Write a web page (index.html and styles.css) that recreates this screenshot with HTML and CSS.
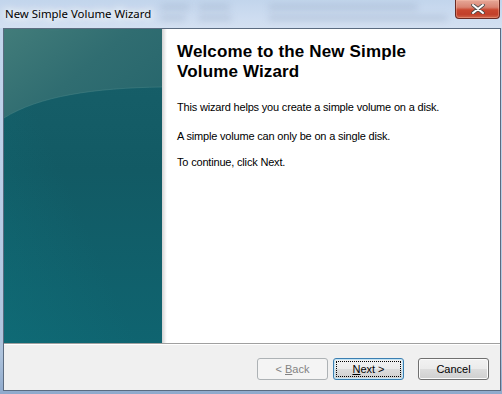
FILE: index.html
```html
<!DOCTYPE html>
<html>
<head>
<meta charset="utf-8">
<link rel="stylesheet" href="styles.css">
</head>
<body>
<div class="window">
  <div class="titlebar">
    <div class="glass">
      <span class="blob b1"></span><span class="blob b2"></span><span class="blob b3"></span>
      <span class="blob b4"></span><span class="blob b5"></span><span class="blob b6"></span>
    </div>
    <span class="title">New Simple Volume Wizard</span>
    <div class="close">
      <svg width="14" height="10" viewBox="0 0 14 10">
        <path d="M2 1L12 9M12 1L2 9" stroke="#4a4a4a" stroke-width="3.6" stroke-linecap="round"/>
        <path d="M2 1L12 9M12 1L2 9" stroke="#ffffff" stroke-width="2" stroke-linecap="round"/>
      </svg>
    </div>
  </div>
  <div class="client">
    <div class="main">
      <svg class="banner" viewBox="0 0 158 314" preserveAspectRatio="none" width="158" height="314">
        <defs>
          <linearGradient id="g1" x1="0" y1="0" x2="0" y2="1">
            <stop offset="0" stop-color="#18606a"/>
            <stop offset="0.45" stop-color="#125a64"/>
            <stop offset="1" stop-color="#0f6470"/>
          </linearGradient>
          <linearGradient id="g2" x1="0" y1="1" x2="0.8" y2="0.3">
            <stop offset="0" stop-color="#0f7680" stop-opacity="0.35"/>
            <stop offset="0.6" stop-color="#0f7680" stop-opacity="0"/>
          </linearGradient>
          <linearGradient id="g3" x1="0" y1="0" x2="1" y2="0.7">
            <stop offset="0" stop-color="#427c7a"/>
            <stop offset="0.55" stop-color="#306d71"/>
            <stop offset="1" stop-color="#28676d"/>
          </linearGradient>
        </defs>
        <rect width="158" height="314" fill="url(#g1)"/>
        <rect width="158" height="314" fill="url(#g2)"/>
        <path d="M0 0H158V58C90 59 35 67 0 89Z" fill="url(#g3)"/>
        <path d="M0 89C35 67 90 59 158 58" stroke="#5a9291" stroke-opacity="0.35" fill="none"/>
      </svg>
      <div class="shade"></div>
      <div class="content">
        <h1 class="heading">Welcome to the New Simple Volume Wizard</h1>
        <p class="p1">This wizard helps you create a simple volume on a disk.</p>
        <p class="p2">A simple volume can only be on a single disk.</p>
        <p class="p3">To continue, click Next.</p>
      </div>
    </div>
    <div class="footer">
      <button class="btn btn-disabled" disabled>&lt; <u>B</u>ack</button>
      <button class="btn btn-default"><u>N</u>ext &gt;</button>
      <button class="btn btn-cancel">Cancel</button>
    </div>
  </div>
</div>
</body>
</html>
```

FILE: styles.css
```css
* { box-sizing: border-box; margin: 0; padding: 0; }
html, body { width: 502px; height: 394px; overflow: hidden; }
body { background: #b4c8e1; }

.window {
  width: 502px;
  height: 394px;
  display: flex;
  flex-direction: column;
  background: linear-gradient(to bottom, #c4d7ed 0%, #bccfe7 40%, #aec3dc 90%, #8ea9cc 100%);
}

.titlebar {
  height: 28px;
  flex: none;
  position: relative;
  display: flex;
  align-items: flex-start;
  justify-content: space-between;
  padding-left: 5px;
  background: linear-gradient(to bottom, #c2d5ec 0%, #cddcf0 60%, #d3e0f1 100%);
}

.glass { position: absolute; inset: 0; overflow: hidden; }
.blob {
  position: absolute;
  background: rgba(110, 130, 160, 0.2);
  filter: blur(3px);
  border-radius: 3px;
}
.b1 { left: 160px; top: 4px; width: 30px; height: 6px; }
.b2 { left: 198px; top: 4px; width: 32px; height: 6px; }
.b3 { left: 268px; top: 4px; width: 150px; height: 6px; }
.b4 { left: 160px; top: 15px; width: 26px; height: 6px; }
.b5 { left: 198px; top: 15px; width: 34px; height: 6px; }
.b6 { left: 268px; top: 15px; width: 180px; height: 6px; }

.title {
  position: relative;
  font-family: "Noto Sans", "Open Sans", sans-serif;
  font-size: 11.4px;
  line-height: 16px;
  padding-top: 6px;
  color: #000;
  text-shadow: 0 0 6px #fff, 0 0 10px #fff, 0 0 14px #eef4fb;
}

.close {
  position: relative;
  width: 45px;
  height: 19px;
  margin-right: 2px;
  border: 1px solid #6a2a22;
  border-top: none;
  border-radius: 0 0 4px 4px;
  background: linear-gradient(to bottom, #e6a898 0%, #d98472 40%, #c9472f 55%, #c2402a 80%, #d0674c 100%);
  box-shadow: inset 0 0 0 1px rgba(255, 200, 180, 0.35);
  display: flex;
  align-items: center;
  justify-content: center;
}

.client {
  flex: 1;
  margin: 0 1px 3px 3px;
  border: 1px solid #5b6b80;
  background: #fff;
  display: flex;
  flex-direction: column;
}

.main { flex: 1; display: flex; }
.banner { flex: none; display: block; }
.shade { width: 5px; flex: none; background: linear-gradient(to right, #d2d2d2, #f4f4f4 70%, #fff); }

.content {
  flex: 1;
  padding: 13px 10px 0 10px;
  color: #000;
}
.heading {
  font-family: "Liberation Sans", Arial, sans-serif;
  font-weight: bold;
  font-size: 17px;
  line-height: 20px;
  letter-spacing: 0.15px;
  width: 250px;
}
.content p {
  font-family: "Liberation Sans", Arial, sans-serif;
  font-size: 11px;
  line-height: 13px;
  letter-spacing: -0.18px;
}
.p1 { margin-top: 19px; }
.p2 { margin-top: 16px; }
.p3 { margin-top: 13px; }

.footer {
  height: 47px;
  flex: none;
  background: #f0f0f0;
  border-top: 1px solid #a0a0a0;
  box-shadow: inset 0 1px 0 #ffffff;
  display: flex;
  justify-content: flex-end;
  align-items: flex-start;
  padding: 14px 11px 0 0;
}

.btn {
  width: 71px;
  height: 22px;
  font-family: "Liberation Sans", Arial, sans-serif;
  font-size: 11px;
  color: #000;
  border: 1px solid #707070;
  border-radius: 3px;
  background: linear-gradient(to bottom, #f2f2f2 0%, #ebebeb 50%, #dddddd 50%, #cfcfcf 100%);
  box-shadow: inset 0 0 0 1px #fbfbfb;
  position: relative;
}
.btn u { text-decoration: underline; }
.btn-disabled {
  border-color: #adb2b5;
  background: #f4f4f4;
  color: #838383;
  box-shadow: none;
}
.btn-default {
  margin-left: 5px;
  border-color: #3c7fb1;
  box-shadow: inset 0 0 0 1px #c4e5f6;
}
.btn-default::after {
  content: "";
  position: absolute;
  inset: 2px;
  border: 1px dotted #000;
  border-radius: 1px;
}
.btn-cancel { margin-left: 14px; }
```
